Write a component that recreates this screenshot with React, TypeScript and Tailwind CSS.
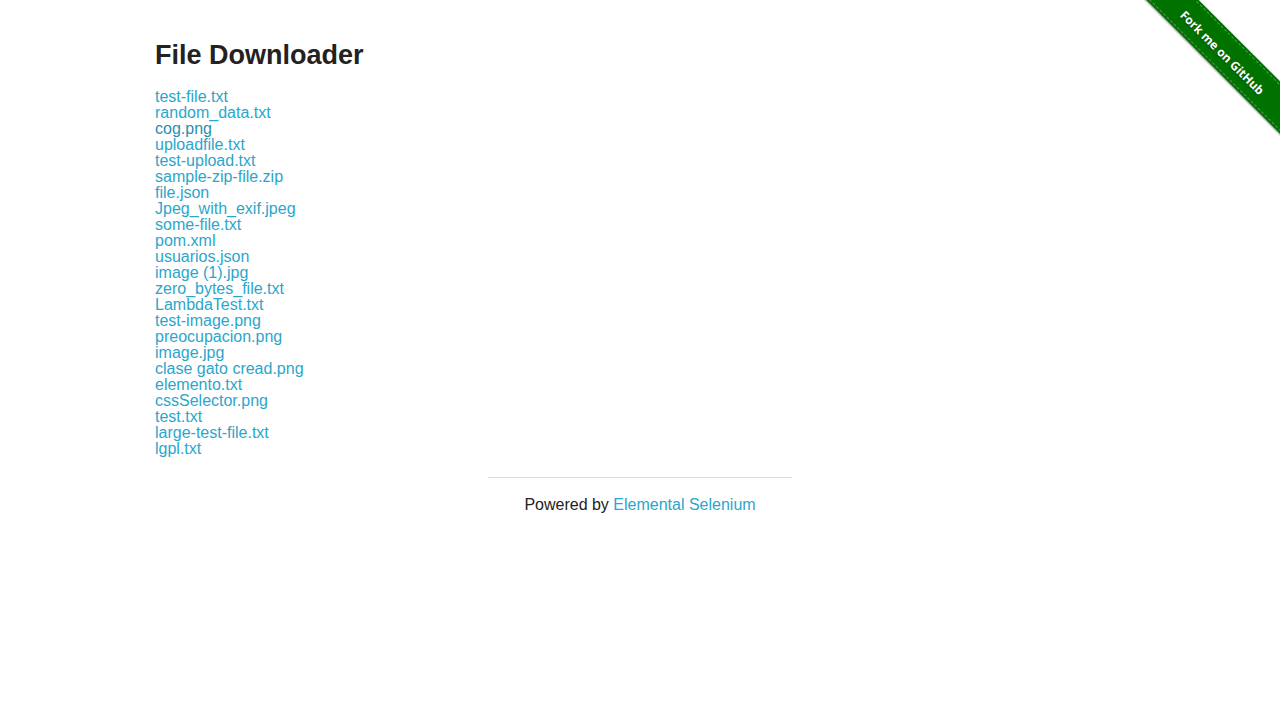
const files = [
  "test-file.txt",
  "random_data.txt",
  "cog.png",
  "uploadfile.txt",
  "test-upload.txt",
  "sample-zip-file.zip",
  "file.json",
  "Jpeg_with_exif.jpeg",
  "some-file.txt",
  "pom.xml",
  "usuarios.json",
  "image (1).jpg",
  "zero_bytes_file.txt",
  "LambdaTest.txt",
  "test-image.png",
  "preocupacion.png",
  "image.jpg",
  "clase gato cread.png",
  "elemento.txt",
  "cssSelector.png",
  "test.txt",
  "large-test-file.txt",
  "lgpl.txt",
];

// ribbon in the top-right corner, sits over the page
function ForkRibbon() {
  return (
    <div className="absolute top-0 right-0 w-[149px] h-[149px] overflow-hidden pointer-events-none">
      <div className="absolute left-[-18px] top-[32px] w-[220px] h-[37px] rotate-45 bg-[#007200] shadow-[0_1px_2px_rgba(0,0,0,0.4)] p-[2px]">
        <div className="h-full border-y border-dashed border-white/30 flex items-center justify-center pt-[5px] pl-[2px]">
          <span className="text-white text-[12px] font-bold font-['Open_Sans',sans-serif] [text-shadow:0_1px_1px_rgba(0,0,0,0.4)]">
            Fork me on GitHub
          </span>
        </div>
      </div>
    </div>
  );
}

export default function App() {
  return (
    <div className="relative min-h-[720px] bg-white font-['Liberation_Sans',Arial,sans-serif] text-[#222]">
      <ForkRibbon />
      <div className="w-[1000px] mx-auto px-[15px] pt-[39px]">
        <h3 className="text-[27px] leading-[32px] font-bold mb-[18px]">File Downloader</h3>
        <div className="flex flex-col items-start text-base leading-4">
          {files.map((f) => (
            <a
              key={f}
              href="#"
              className={f === "cog.png" ? "text-[#258faf]" : "text-[#2ba6cb]"}
            >
              {f}
            </a>
          ))}
        </div>
      </div>
      <div className="flex flex-col items-center gap-[15px] pt-[20px]">
        <hr className="w-[304px] border-0 border-t border-[#ddd]" />
        <p className="text-base leading-6">
          Powered by <a href="#" className="text-[#2ba6cb]">Elemental Selenium</a>
        </p>
      </div>
    </div>
  );
}
